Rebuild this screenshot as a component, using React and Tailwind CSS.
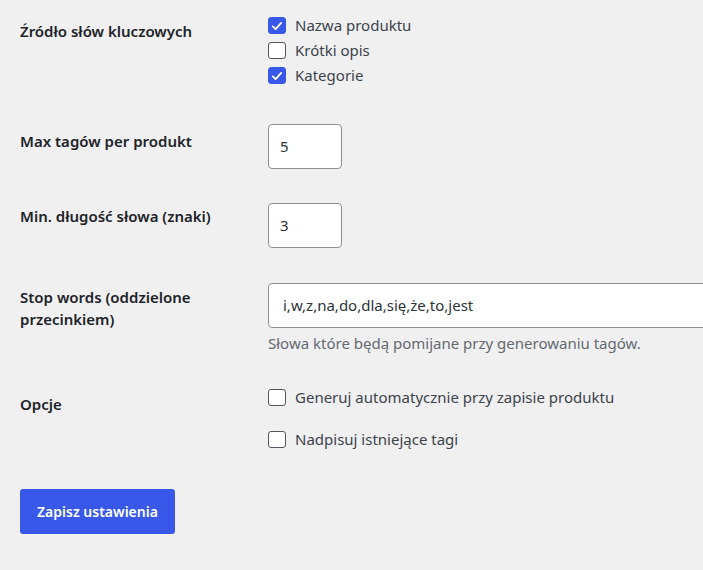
import React from "react";

const font = { fontFamily: '"Noto Sans", "Open Sans", sans-serif' };

const Check = ({ checked, label }) => (
  <label className="flex items-center gap-[9px] h-[25px] text-[15px] text-[#3c434a]">
    <span
      className={`w-[18px] h-[17px] rounded-[3px] border flex items-center justify-center ${
        checked ? "bg-[#3858e9] border-[#3858e9]" : "bg-white border-[#50575e]"
      }`}
    >
      {checked && (
        <svg viewBox="0 0 20 20" className="w-[14px] h-[14px]" fill="none">
          <path d="M4 10.5l4 4 8-9" stroke="white" strokeWidth="2.6" strokeLinecap="round" strokeLinejoin="round" />
        </svg>
      )}
    </span>
    {label}
  </label>
);

const Label = ({ children, pt }) => (
  <div className={`w-[248px] shrink-0 text-[15px] font-semibold text-[#1d2327] leading-[22px] ${pt}`}>
    {children}
  </div>
);

export default function App() {
  return (
    <div className="min-h-screen w-[703px] h-[570px] overflow-hidden bg-[#f0f0f1] px-5" style={font}>
      {/* Source of keywords */}
      <div className="flex pb-[36px]">
        <Label pt="pt-[20px]">Źródło słów kluczowych</Label>
        <div className="pt-[13px]">
          <Check checked label="Nazwa produktu" />
          <Check label="Krótki opis" />
          <Check checked label="Kategorie" />
        </div>
      </div>

      {/* Max tags */}
      <div className="flex pb-[34px]">
        <Label pt="pt-[6px]">Max tagów per produkt</Label>
        <div className="w-[74px] h-[45px] bg-white border border-[#8c8f94] rounded-[4px] flex items-center pl-[11px] text-[15px] text-[#2c3338]">
          5
        </div>
      </div>

      {/* Min length */}
      <div className="flex pb-[35px]">
        <Label pt="pt-[2px]">Min. długość słowa (znaki)</Label>
        <div className="w-[74px] h-[45px] bg-white border border-[#8c8f94] rounded-[4px] flex items-center pl-[11px] text-[15px] text-[#2c3338]">
          3
        </div>
      </div>

      {/* Stop words */}
      <div className="flex pb-[34px]">
        <Label pt="pt-[3px]">
          Stop words (oddzielone
          <br />
          przecinkiem)
        </Label>
        <div>
          <div className="w-[480px] h-[45px] bg-white border border-[#8c8f94] rounded-[4px] flex items-center pl-[14px] text-[15px] text-[#2c3338]">
            i,w,z,na,do,dla,się,że,to,jest
          </div>
          <p className="mt-[5px] text-[15px] leading-[20px] text-[#646970]">
            Słowa które będą pomijane przy generowaniu tagów.
          </p>
        </div>
      </div>

      {/* Options */}
      <div className="flex pb-[37px]">
        <Label pt="pt-[6px]">Opcje</Label>
        <div className="flex flex-col gap-[17px] -mt-[2px]">
          <Check label="Generuj automatycznie przy zapisie produktu" />
          <Check label="Nadpisuj istniejące tagi" />
        </div>
      </div>

      <button className="h-[45px] px-[17px] rounded-[3px] bg-[#3858e9] text-white text-[14px] font-semibold">
        Zapisz ustawienia
      </button>
    </div>
  );
}
